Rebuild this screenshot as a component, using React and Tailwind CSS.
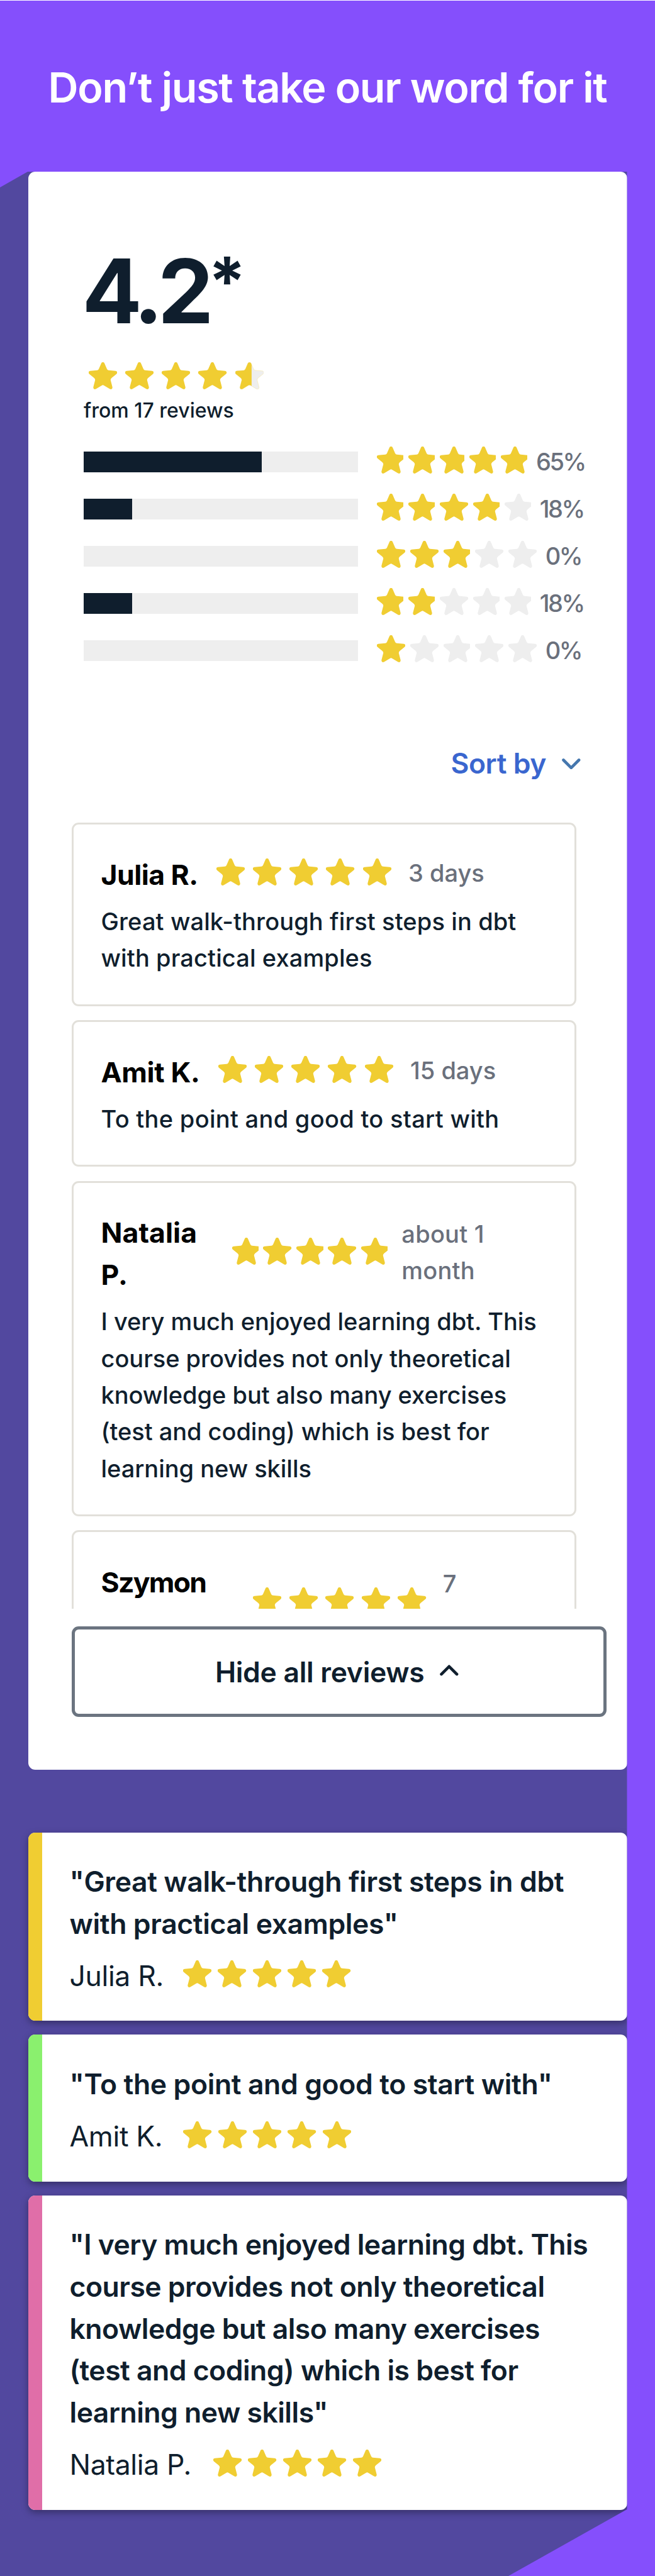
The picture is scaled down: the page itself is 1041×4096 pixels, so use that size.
const FULL = 45.3;

const breakdown = [
  { score: 5, label: "65%", fill: 65, widths: [42.3, 42.3, 39.5, 42.3, 42.3] },
  { score: 4, label: "18%", fill: 17.6, widths: [42.3, 42.3, FULL, 42.3, 42.3] },
  { score: 3, label: "0%", fill: 0, widths: [FULL, FULL, 42.3, FULL, FULL] },
  { score: 2, label: "18%", fill: 17.6, widths: [42.3, 42.3, FULL, 42.3, 42.3] },
  { score: 1, label: "0%", fill: 0, widths: [FULL, FULL, 42.3, FULL, FULL] },
];

const reviews = [
  {
    name: "Julia R.",
    date: "3 days",
    text: "Great walk-through first steps in dbt with practical examples",
    nameClass: "w-[183px] tracking-[-0.012em]",
    starsClass: "gap-[13px]",
    dateClass: "ml-[27px]",
    textClass: "tracking-[0.003em]",
  },
  {
    name: "Amit K.",
    date: "15 days",
    text: "To the point and good to start with",
    nameClass: "w-[186px] tracking-[-0.008em]",
    starsClass: "gap-[13px]",
    dateClass: "ml-[27px]",
    textClass: "tracking-[0.008em]",
  },
  {
    name: "Natalia\nP.",
    date: "about 1\nmonth",
    text: "I very much enjoyed learning dbt. This course provides not only theoretical knowledge but also many exercises (test and coding) which is best for learning new skills",
    nameClass: "w-[208px] tracking-[0.002em]",
    starsClass: "gap-[7.6px]",
    dateClass: "ml-[22px] tracking-[0.006em]",
    textClass: "tracking-[-0.001em]",
    widths: [42.3, FULL, 42.3, FULL, 42.3],
  },
  {
    name: "Szymon\n\u00a0",
    date: "7\n\u00a0",
    text: "",
    nameClass: "w-[241.5px] tracking-[-0.038em]",
    starsClass: "gap-[12.3px]",
    dateClass: "ml-[26px]",
    textClass: "",
  },
];

const quotes = [
  {
    name: "Julia R.",
    text: "Great walk-through first steps in dbt with practical examples",
    bar: "bg-[#f0cd32]",
    gap: "gap-[31px]",
    textClass: "tracking-[-0.0085em]",
  },
  {
    name: "Amit K.",
    text: "To the point and good to start with",
    bar: "bg-[#8af06e]",
    gap: "gap-[33px]",
    textClass: "tracking-[-0.0085em]",
  },
  {
    name: "Natalia P.",
    text: "I very much enjoyed learning dbt. This course provides not only theoretical knowledge but also many exercises (test and coding) which is best for learning new skills",
    bar: "bg-[#e06ea8]",
    gap: "gap-[35px]",
    textClass: "tracking-[-0.0115em]",
  },
];

const STAR =
  "M65 5C68 -1 78 -1 81 5L94 35Q97 41 103 42L138 45C147 46 150 55 143 61L118 81Q112 86 113 93L122 128C124 137 116 142 109 138L79 120Q73 116 67 120L37 138C30 142 22 137 24 128L33 93Q34 86 28 81L3 61C-4 55 -1 46 8 45L43 42Q49 41 52 35Z";

function Star({ width = FULL, color = "#f0cd32" }) {
  // narrower stars keep their size and lose the right tip
  return (
    <svg width={width} height="43" viewBox={`0 0 ${(width / FULL) * 147} 140`} preserveAspectRatio="xMinYMid slice" className="shrink-0">
      <path d={STAR} fill={color} />
    </svg>
  );
}

function HalfStar() {
  return (
    <svg width={FULL} height="43" viewBox="0 0 147 140" className="shrink-0">
      <defs>
        <clipPath id="half">
          <rect width="84" height="140" />
        </clipPath>
      </defs>
      <path d={STAR} fill="#eee" stroke="#f5e6a8" strokeWidth="2" />
      <path d={STAR} fill="#f0cd32" clipPath="url(#half)" />
    </svg>
  );
}

function Stars({ score = 5, widths = [FULL, FULL, FULL, FULL, FULL], className }) {
  return (
    <div className={`flex shrink-0 ${className}`}>
      {widths.map((w, i) => (
        <Star key={i} width={w} color={i < score ? "#f0cd32" : "#eeeeee"} />
      ))}
    </div>
  );
}

function Chevron({ up, className }) {
  return (
    <svg width="29.6" height="17.6" viewBox="0 0 32 19" fill="none" stroke="currentColor" strokeWidth="5" strokeLinecap="round" strokeLinejoin="round" className={className}>
      <path d={up ? "M2.7 16.3L16 3L29.3 16.3" : "M2.7 2.7L16 16L29.3 2.7"} />
    </svg>
  );
}

function Summary() {
  return (
    <div className="pl-[88.5px]">
      <p className="-ml-[2.5px] text-[141px] leading-[141px] font-bold tracking-[-0.062em]">
        4.2<span className="align-[27px] text-[108px] leading-[0]">*</span>
      </p>
      <div className="mt-[43px] ml-[7.5px] flex gap-[13px]">
        <Star />
        <Star />
        <Star />
        <Star />
        <HalfStar />
      </div>
      <p className="mt-[14px] text-[32px] leading-[40px] font-medium">from 17 reviews</p>

      <div className="mt-[24px]">
        {breakdown.map((row) => (
          <div key={row.score} className="flex h-[75px] items-center">
            <div className="h-[33px] w-[436px] bg-[#eeeeee]">
              <div className="h-full bg-[#0f1e2d]" style={{ width: `${row.fill}%` }} />
            </div>
            <Stars score={row.score} widths={row.widths} className="ml-[30px] gap-[7.7px] pb-[6px]" />
            <span className="ml-[13.5px] text-[38px] font-medium tracking-[-0.065em] text-[#6a707c]">{row.label}</span>
          </div>
        ))}
      </div>
    </div>
  );
}

function ReviewCard({ review }) {
  return (
    <div className="rounded-[11px] border-[3px] border-[#e2e0da] pt-[46.5px] pr-[40px] pb-[43.8px] pl-[44px]">
      <div className="flex items-center">
        <p className={`${review.nameClass} shrink-0 text-[44.5px] leading-[66.6px] font-bold whitespace-pre-line text-black`}>{review.name}</p>
        <Stars widths={review.widths} className={`${review.starsClass} pb-[8px]`} />
        <p className={`${review.dateClass} pb-[5px] text-[38px] leading-[58.3px] font-medium whitespace-pre-line text-[#6a707c]`}>{review.date}</p>
      </div>
      <p className={`${review.textClass} mt-[12px] text-[38px] leading-[58.3px] font-medium`}>{review.text}</p>
    </div>
  );
}

function QuoteCard({ quote }) {
  return (
    <div className="flex overflow-hidden rounded-[11px] bg-white shadow-[0_4px_12px_rgba(0,0,0,0.35)]">
      <div className={`w-[22px] shrink-0 ${quote.bar}`} />
      <div className="pt-[45.5px] pr-[40px] pb-[38.2px] pl-[44px]">
        <p className={`${quote.textClass} text-[44.5px] leading-[66.6px] font-semibold`}>{`"${quote.text}"`}</p>
        <div className={`mt-[16.5px] flex items-center ${quote.gap}`}>
          <span className="text-[44.5px] leading-[66.6px] tracking-[-0.008em]">{quote.name}</span>
          <Stars className="gap-[10.1px] pb-[6px]" />
        </div>
      </div>
    </div>
  );
}

function App() {
  return (
    <div className="h-[4096px] w-[1041px] overflow-hidden border-t border-white bg-[#854ffc] font-['Inter','Liberation_Sans',sans-serif] text-[#0f1e2d]">
      <h2 className="h-[272px] pt-[97.5px] text-center text-[66.5px] leading-[80px] font-semibold tracking-[-0.02em] whitespace-nowrap text-white">
        Don’t just take our word for it
      </h2>

      {/* dark slab behind the cards, cut at two corners */}
      <div className="h-[3823px] bg-[#52489f] px-[44.5px] [clip-path:polygon(0_25px,44px_0,996.5px_0,996.5px_3717px,808px_3823px,0_3823px)]">
        <div className="h-[2540.5px] rounded-[11px] bg-white pt-[119px]">
          <Summary />

          <div className="mt-[109px] mr-[74px] flex items-center justify-end gap-[25px] text-[#3a66cf]">
            <span className="text-[44.5px] leading-[66.6px] font-semibold tracking-[-0.01em]">Sort by</span>
            <Chevron className="text-[#4577ae]" />
          </div>

          <div className="mt-[60.5px] ml-[69px] flex h-[1249.5px] w-[802px] flex-col gap-[22.5px] overflow-hidden">
            {reviews.map((r) => (
              <ReviewCard key={r.name} review={r} />
            ))}
          </div>

          <button className="mt-[28px] ml-[69px] flex h-[144px] w-[850px] items-center justify-center gap-[25px] rounded-[11px] border-[5.5px] border-[#6b7480] pt-[3px] pr-[6px] text-[44.5px] font-semibold tracking-[-0.007em]">
            Hide all reviews
            <Chevron up className="mb-[6px]" />
          </button>
        </div>

        <div className="mt-[100px] flex flex-col gap-[22px]">
          {quotes.map((q) => (
            <QuoteCard key={q.name} quote={q} />
          ))}
        </div>
      </div>
    </div>
  );
}

export default App;
